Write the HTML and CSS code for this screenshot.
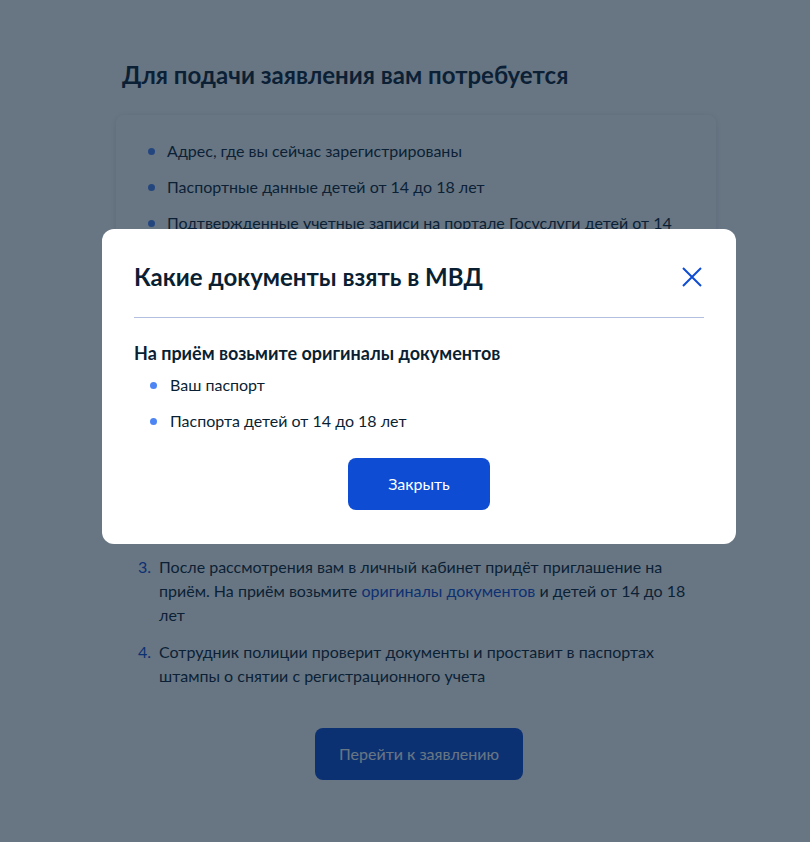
FILE: index.html
```html
<!DOCTYPE html>
<html lang="ru">
<head>
<meta charset="utf-8">
<title>Для подачи заявления</title>
<link rel="stylesheet" href="styles.css">
</head>
<body>
<main class="page">
  <h1 class="page-title">Для подачи заявления вам потребуется</h1>
  <section class="card">
    <ul class="bullets">
      <li>Адрес, где вы сейчас зарегистрированы</li>
      <li>Паспортные данные детей от 14 до 18 лет</li>
      <li>Подтвержденные учетные записи на портале Госуслуги детей от 14 до 18 лет</li>
      <li>Свидетельства о рождении детей до 14 лет</li>
    </ul>
  </section>
  <h2 class="section-title">Как подать заявление</h2>
  <ol class="steps">
    <li class="step"><span class="num">1.</span><span class="text">Заполните заявление и укажите данные всех, кто снимается с регистрационного учета вместе с вами</span></li>
    <li class="step"><span class="num">2.</span><span class="text">Отправьте заявление в МВД. Статус рассмотрения можно отслеживать в личном кабинете. Срок рассмотрения — до 3 рабочих дней</span></li>
    <li class="step"><span class="num">3.</span><span class="text">После рассмотрения вам в личный кабинет придёт приглашение на приём. На приём возьмите <a class="link" href="#">оригиналы документов</a> и детей от 14 до 18 лет</span></li>
    <li class="step"><span class="num">4.</span><span class="text">Сотрудник полиции проверит документы и проставит в паспортах штампы о снятии с регистрационного учета</span></li>
  </ol>
  <div class="actions">
    <button class="btn">Перейти к заявлению</button>
  </div>
</main>

<div class="overlay"></div>
<div class="modal" role="dialog">
  <div class="modal-head">
    <h2 class="modal-title">Какие документы взять в МВД</h2>
    <button class="close" aria-label="Закрыть">
      <svg width="24" height="24" viewBox="0 0 24 24" fill="none"><path d="M3 3L21 21M21 3L3 21" stroke="#0d4cd3" stroke-width="2"/></svg>
    </button>
  </div>
  <div class="divider"></div>
  <h3 class="modal-sub">На приём возьмите оригиналы документов</h3>
  <ul class="bullets modal-list">
    <li>Ваш паспорт</li>
    <li>Паспорта детей от 14 до 18 лет</li>
  </ul>
  <div class="actions modal-actions">
    <button class="btn">Закрыть</button>
  </div>
</div>
</body>
</html>
```

FILE: styles.css
```css
* { box-sizing: border-box; }
html, body { margin: 0; padding: 0; }
body {
  font-family: Lato, "Noto Sans", sans-serif;
  color: #0b1f33;
  background: #ffffff;
  font-size: 16px;
  line-height: 24px;
}
.page {
  width: 600px;
  margin-left: 116px;
  padding-top: 59px;
  padding-bottom: 62px;
}
.page-title {
  margin: 0 0 24px;
  padding-left: 6px;
  font-size: 24px;
  line-height: 32px;
  font-weight: 700;
}
.card {
  background: #fff;
  border-radius: 8px;
  box-shadow: 0 1px 6px rgba(11, 31, 51, 0.12);
  padding: 24px 32px;
}
.bullets {
  list-style: none;
  margin: 0;
  padding: 0;
  display: flex;
  flex-direction: column;
  gap: 12px;
}
.bullets li {
  position: relative;
  padding-left: 19px;
}
.bullets li::before {
  content: "";
  position: absolute;
  left: 0;
  top: 9px;
  width: 7px;
  height: 7px;
  border-radius: 50%;
  background: #4d85f5;
}
.section-title {
  margin: 62px 0 20px;
  font-size: 24px;
  line-height: 32px;
  font-weight: 700;
}
.steps {
  list-style: none;
  margin: 0;
  padding: 0 16px 0 22px;
  display: flex;
  flex-direction: column;
  gap: 13px;
}
.step {
  display: flex;
  gap: 8px;
}
.num {
  color: #0d4cd3;
  flex: 0 0 13px;
}
.link {
  color: #0d4cd3;
  text-decoration: none;
}
.actions {
  display: flex;
  justify-content: center;
  margin-top: 40px;
}
.page .actions {
  padding-left: 6px;
}
.btn {
  font-family: inherit;
  font-size: 16px;
  line-height: 24px;
  height: 52px;
  padding: 0 24px;
  border: 0;
  border-radius: 8px;
  background: #0d4cd3;
  color: #fff;
}
.overlay {
  position: fixed;
  inset: 0;
  background: rgba(11, 32, 55, 0.62);
}
.modal {
  position: absolute;
  left: 102px;
  top: 229px;
  width: 634px;
  background: #fff;
  border-radius: 12px;
  padding: 32px 32px 34px;
}
.modal-head {
  display: flex;
  justify-content: space-between;
  align-items: center;
}
.modal-title {
  margin: 0;
  font-size: 24px;
  line-height: 32px;
  font-weight: 700;
}
.close {
  width: 24px;
  height: 24px;
  padding: 0;
  border: 0;
  background: none;
  display: flex;
}
.divider {
  height: 1px;
  background: #b3bfe0;
  margin: 24px 0 23px;
}
.modal-sub {
  margin: 0 0 8px;
  font-size: 18px;
  line-height: 24px;
  font-weight: 700;
}
.modal-list {
  padding-left: 16px;
}
.modal-list li {
  padding-left: 20px;
}
.modal-actions {
  margin-top: 25px;
}
.modal-actions .btn {
  padding: 0 40px;
}
```
